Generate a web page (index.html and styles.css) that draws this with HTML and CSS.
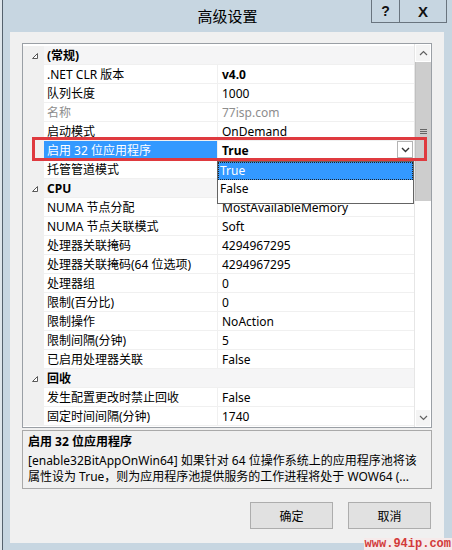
FILE: index.html
```html
<!DOCTYPE html>
<html>
<head>
<meta charset="utf-8">
<link rel="stylesheet" href="styles.css">
</head>
<body>
<div class="window">
  <div class="titlebar">
    <div></div>
    <div class="title">高级设置</div>
    <div class="caption-btns"><span class="cbtn help">?</span><span class="cbtn close">X</span></div>
  </div>
  <div class="client">
    <div class="grid">
      <div class="rows">
        <div class="row cat"><span class="gutter"><svg width="8" height="8" viewBox="0 0 8 8"><polygon points="6.5,1.5 6.5,6.5 1.5,6.5" fill="#fff" stroke="#595959" stroke-width="1"/></svg></span><span class="label">(常规)</span></div>
        <div class="row"><span class="gutter"></span><span class="label">.NET CLR 版本</span><span class="value bold">v4.0</span></div>
        <div class="row"><span class="gutter"></span><span class="label">队列长度</span><span class="value">1000</span></div>
        <div class="row dis"><span class="gutter"></span><span class="label">名称</span><span class="value">77isp.com</span></div>
        <div class="row"><span class="gutter"></span><span class="label">启动模式</span><span class="value">OnDemand</span></div>
        <div class="row sel"><span class="gutter"></span><span class="label">启用 32 位应用程序</span><span class="value bold">True<span class="ddbtn"><svg width="9" height="6" viewBox="0 0 9 6"><polyline points="1,1 4.5,4.5 8,1" fill="none" stroke="#333" stroke-width="1.4"/></svg></span></span></div>
        <div class="row"><span class="gutter"></span><span class="label">托管管道模式</span><span class="value"></span></div>
        <div class="row cat"><span class="gutter"><svg width="8" height="8" viewBox="0 0 8 8"><polygon points="6.5,1.5 6.5,6.5 1.5,6.5" fill="#fff" stroke="#595959" stroke-width="1"/></svg></span><span class="label">CPU</span></div>
        <div class="row"><span class="gutter"></span><span class="label">NUMA 节点分配</span><span class="value">MostAvailableMemory</span></div>
        <div class="row"><span class="gutter"></span><span class="label">NUMA 节点关联模式</span><span class="value">Soft</span></div>
        <div class="row"><span class="gutter"></span><span class="label">处理器关联掩码</span><span class="value">4294967295</span></div>
        <div class="row"><span class="gutter"></span><span class="label">处理器关联掩码(64 位选项)</span><span class="value">4294967295</span></div>
        <div class="row"><span class="gutter"></span><span class="label">处理器组</span><span class="value">0</span></div>
        <div class="row"><span class="gutter"></span><span class="label">限制(百分比)</span><span class="value">0</span></div>
        <div class="row"><span class="gutter"></span><span class="label">限制操作</span><span class="value">NoAction</span></div>
        <div class="row"><span class="gutter"></span><span class="label">限制间隔(分钟)</span><span class="value">5</span></div>
        <div class="row"><span class="gutter"></span><span class="label">已启用处理器关联</span><span class="value">False</span></div>
        <div class="row cat"><span class="gutter"><svg width="8" height="8" viewBox="0 0 8 8"><polygon points="6.5,1.5 6.5,6.5 1.5,6.5" fill="#fff" stroke="#595959" stroke-width="1"/></svg></span><span class="label">回收</span></div>
        <div class="row"><span class="gutter"></span><span class="label">发生配置更改时禁止回收</span><span class="value">False</span></div>
        <div class="row"><span class="gutter"></span><span class="label">固定时间间隔(分钟)</span><span class="value">1740</span></div>
      </div>
      <div class="scrollbar">
        <div class="sb-btn"><svg width="9" height="6" viewBox="0 0 9 6"><polyline points="1,5 4.5,1.5 8,5" fill="none" stroke="#606060" stroke-width="1.2"/></svg></div>
        <div class="thumb"><span class="grip"></span><span class="grip"></span><span class="grip"></span></div>
        <div class="track"></div>
        <div class="sb-btn"><svg width="9" height="6" viewBox="0 0 9 6"><polyline points="1,1 4.5,4.5 8,1" fill="none" stroke="#606060" stroke-width="1.2"/></svg></div>
      </div>
      <div class="dropdown">
        <div class="dd-item active">True</div>
        <div class="dd-item">False</div>
      </div>
    </div>
    <div class="desc">
      <div class="desc-title">启用 32 位应用程序</div>
      <div class="desc-line">[enable32BitAppOnWin64] 如果针对 64 位操作系统上的应用程序池将该</div>
      <div class="desc-line">属性设为 True，则为应用程序池提供服务的工作进程将处于 WOW64 (...</div>
    </div>
    <div class="buttons">
      <button class="btn">确定</button>
      <button class="btn">取消</button>
    </div>
  </div>
  <div class="highlight"></div>
  <div class="watermark">www.94ip.com</div>
</div>
</body>
</html>
```

FILE: styles.css
```css
* { box-sizing: border-box; }
html, body {
  margin: 0;
  padding: 0;
  background: #dfe6eb;
  font-family: "Segoe UI", "Noto Sans", "Noto Sans CJK SC", sans-serif;
  font-size: 12px;
  color: #000;
}
.window {
  position: relative;
  margin-left: 2px;
  width: 450px;
  height: 550px;
  background: #c7d6e1;
  border-left: 1px solid #55626d;
  display: flex;
  flex-direction: column;
  overflow: hidden;
}
.titlebar {
  height: 32px;
  display: grid;
  grid-template-columns: 1fr auto 1fr;
  align-items: start;
  flex: none;
}
.title {
  font-family: "Noto Sans CJK SC", sans-serif;
  font-size: 15px;
  line-height: 32px;
  color: #000;
}
.caption-btns {
  justify-self: end;
  display: flex;
  margin-right: 5px;
}
.cbtn {
  height: 23px;
  border: 1px solid #69747e;
  border-top: none;
  display: flex;
  align-items: center;
  justify-content: center;
  font-family: "Liberation Sans", sans-serif;
  font-weight: bold;
  font-size: 14px;
  color: #111;
}
.help { width: 28px; border-right: none; }
.close { width: 48px; font-size: 15px; }
.client {
  flex: 1;
  margin: 0 8px 7px 7px;
  background: #f0f0f0;
  padding: 11px 12px 0 12px;
  display: flex;
  flex-direction: column;
}
.grid {
  position: relative;
  height: 385px;
  border: 1px solid #9a9fa5;
  background: #fff;
  display: flex;
  flex: none;
}
.rows {
  width: 391px;
  padding-top: 2px;
  display: flex;
  flex-direction: column;
}
.row {
  height: 19px;
  display: flex;
  line-height: 19px;
  white-space: nowrap;
}
.gutter {
  width: 21px;
  flex: none;
  background: #f0f0f0;
  display: flex;
  align-items: center;
  justify-content: center;
  padding-left: 2px;
}
.label {
  width: 174px;
  flex: none;
  padding-left: 3px;
  border-right: 1px solid #f0f0f0;
  border-bottom: 1px solid #f0f0f0;
}
.value {
  flex: 1;
  padding-left: 4px;
  border-bottom: 1px solid #f0f0f0;
  display: flex;
  align-items: center;
  position: relative;
}
.bold { font-weight: bold; }
.cat .label {
  flex: 1;
  width: auto;
  font-weight: bold;
  background: #f5f5f6;
  border-right: none;
}
.dis .label, .dis .value { color: #8d8d8d; }
.sel .label {
  background: #3399ff;
  color: #fff;
}
.ddbtn {
  position: absolute;
  right: 1px;
  top: 0;
  width: 16px;
  height: 17px;
  border: 1px solid #b4b4b4;
  background: #fff;
  display: flex;
  align-items: center;
  justify-content: center;
}
.scrollbar {
  width: 17px;
  display: flex;
  flex-direction: column;
  border-left: 1px solid #e6e6e6;
  background: #fff;
}
.sb-btn {
  height: 18px;
  display: flex;
  align-items: center;
  justify-content: center;
  background: #f4f4f4;
  border: 1px solid #fff;
}
.thumb {
  height: 139px;
  background: #cdcdcd;
  border-left: 1px solid #c0c0c0;
  display: flex;
  flex-direction: column;
  align-items: center;
  justify-content: center;
  gap: 1px;
}
.grip {
  width: 7px;
  height: 1px;
  background: #666;
}
.track { flex: 1; }
.dropdown {
  position: absolute;
  left: 194px;
  top: 117px;
  width: 197px;
  height: 43px;
  border: 1px solid #646464;
  background: #fff;
}
.dd-item {
  height: 18px;
  line-height: 18px;
  padding-left: 2px;
}
.dd-item.active {
  background: #3399ff;
  color: #fff;
  outline: 1px dotted #222;
  outline-offset: -1px;
}
.desc {
  margin-top: 2px;
  height: 59px;
  border: 1px solid #a9a9a9;
  padding: 2px 0 0 5px;
  overflow: hidden;
  flex: none;
}
.desc-title {
  font-weight: bold;
  line-height: 17px;
  margin-bottom: 3px;
}
.desc-line {
  line-height: 16px;
  white-space: nowrap;
  overflow: hidden;
}
.buttons {
  margin-top: 13px;
  display: flex;
  justify-content: flex-end;
  gap: 15px;
  padding-right: 1px;
}
.btn {
  width: 83px;
  height: 27px;
  background: #e1e1e1;
  border: 1px solid #adadad;
  font-family: "Noto Sans CJK SC", sans-serif;
  font-size: 12px;
  color: #000;
  padding: 0;
}
.highlight {
  position: absolute;
  left: 29px;
  top: 137px;
  width: 395px;
  height: 24px;
  border: 3px solid #df3a3f;
  pointer-events: none;
}
.watermark {
  position: absolute;
  right: 0;
  bottom: 0;
  font-family: "Liberation Mono", monospace;
  font-size: 12px;
  line-height: 12px;
  font-weight: bold;
  color: #d23a3a;
  background: #f6eaea;
  padding: 0 1px;
}
```
